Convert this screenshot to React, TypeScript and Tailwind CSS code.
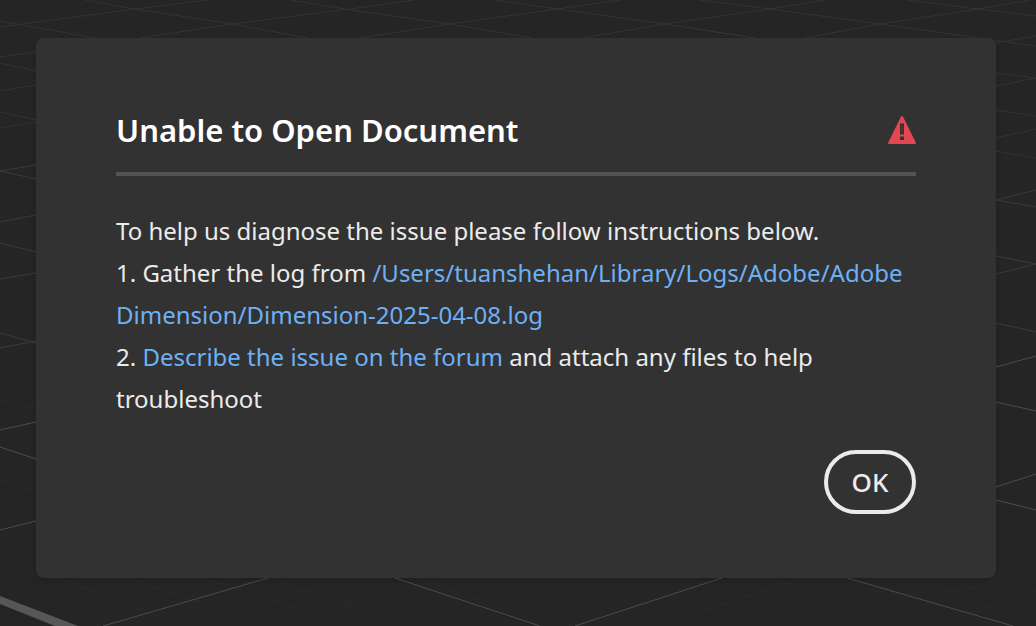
// Floor grid of the empty 3D canvas, far lines are dimmer than near ones
const farLines =
    'M85 0L135 9L232 24L308 38 M0 27L135 9L207 0 M0 21L95 38 M140 38L232 24L350 9L414 0 ' +
    'M290 0L345 9L450 24L532 38 M0 57L36 52 M360 38L450 24L557 9L620 0 M495 0L557 9L665 24L755 38 ' +
    'M583 38L665 24L770 9L825 0 M700 0L770 9L880 24L930 31L1036 46 M805 38L880 24L978 9L1030 0 ' +
    'M907 0L978 9L1036 16 M996 43L1036 36 M690 28L755 38 M0 63L36 71 M0 91L36 85 M0 112L36 120 ' +
    'M0 128L36 122 M996 73L1036 78L996 86 M996 110L1036 116 M996 138L1036 129 M996 151L1036 158';

const midLines =
    'M36 165L0 171L36 179 M0 222L36 215 M0 243L36 252 M0 279L36 273 M0 333L36 343 M0 348L36 341 ' +
    'M1036 190L996 200L1036 207 M996 256L1036 264L996 274 M996 323L1036 332';

const nearLines =
    'M0 430L36 422 M0 447L36 459 M0 530L36 521 M103 626L268 578 M395 578L540 626 M575 626L722 578 ' +
    'M847 578L1013 626 M996 367L1036 356 M996 402L1036 411 M996 487L1036 474 M996 500L1036 510';

const minorLines =
    'M60 579L175 622 M130 579L230 612 M0 565L40 582 M210 580L300 610 M280 583L370 613 M345 600L400 620 ' +
    'M430 583L480 600 M790 582L700 612 M880 590L790 620 M960 588L850 624 M1036 565L960 592 M1036 590L950 620 ' +
    'M1036 540L1000 553 M0 480L36 492 M0 400L36 408';

const Grid = () => {
    return (
        <svg className="absolute inset-0 h-full w-full" viewBox="0 0 1036 626" preserveAspectRatio="xMidYMid slice"
             fill="none" aria-hidden="true">
            <path d={minorLines} stroke="#2b2b2b" strokeDasharray="14 6"/>
            <path d={farLines} stroke="#333333"/>
            <path d={midLines} stroke="#3b3b3b"/>
            <path d={nearLines} stroke="#4c4c4c"/>
            <path d="M0 596L78 626H55L0 604Z" fill="#575757"/>
        </svg>
    );
};

const WarningIcon = () => {
    return (
        <svg className="h-7 w-7 shrink-0" viewBox="0 0 28 28" role="img" aria-label="Error">
            <path
                d="M13.1 0.6a1 1 0 0 1 1.8 0L27.8 26.4a1.1 1.1 0 0 1-1 1.6H1.2a1.1 1.1 0 0 1-1-1.6Z"
                fill="#e34850"/>
            <path d="M12 7.5h4v11h-4Z M12 20.5h4v3.5h-4Z" fill="#323232"/>
            <path d="M13.5 9h1v8h-1Z" fill="#63373a"/>
        </svg>
    );
};

const App = () => {
    const logPath = '/Users/tuanshehan/Library/Logs/Adobe/Adobe Dimension/Dimension-2025-04-08.log';

    return (
        <main className="relative flex min-h-screen items-start overflow-hidden bg-[#252525] px-9 pt-[38px] pb-12 font-['Noto_Sans',sans-serif] sm:pr-10">
            <Grid/>
            <section role="alertdialog" aria-labelledby="dialog-title"
                     className="relative w-full rounded-lg bg-[#323232] px-20 pt-[70px] pb-16 shadow-md">
                <header className="flex items-center justify-between border-b-4 border-[#545454] pb-5">
                    <h1 id="dialog-title" className="text-[31px] leading-[44px] font-semibold text-white">
                        Unable to Open Document
                    </h1>
                    <WarningIcon/>
                </header>
                <div className="pt-[34px] text-[24px] leading-[42px] text-[#ebebeb]">
                    <p>To help us diagnose the issue please follow instructions below.</p>
                    <p>1. Gather the log from <a href="#log" className="text-[#6eb0f5]">{logPath}</a></p>
                    <p>
                        2. <a href="#forum" className="text-[#6eb0f5]">Describe the issue on the forum</a> and attach
                        any files to help troubleshoot
                    </p>
                </div>
                <footer className="flex justify-end pt-[30px]">
                    <button type="button"
                            className="h-16 w-[92px] rounded-full border-4 border-[#ebebeb] text-[26px] font-medium text-[#ebebeb]">
                        OK
                    </button>
                </footer>
            </section>
        </main>
    );
};

export default App;
